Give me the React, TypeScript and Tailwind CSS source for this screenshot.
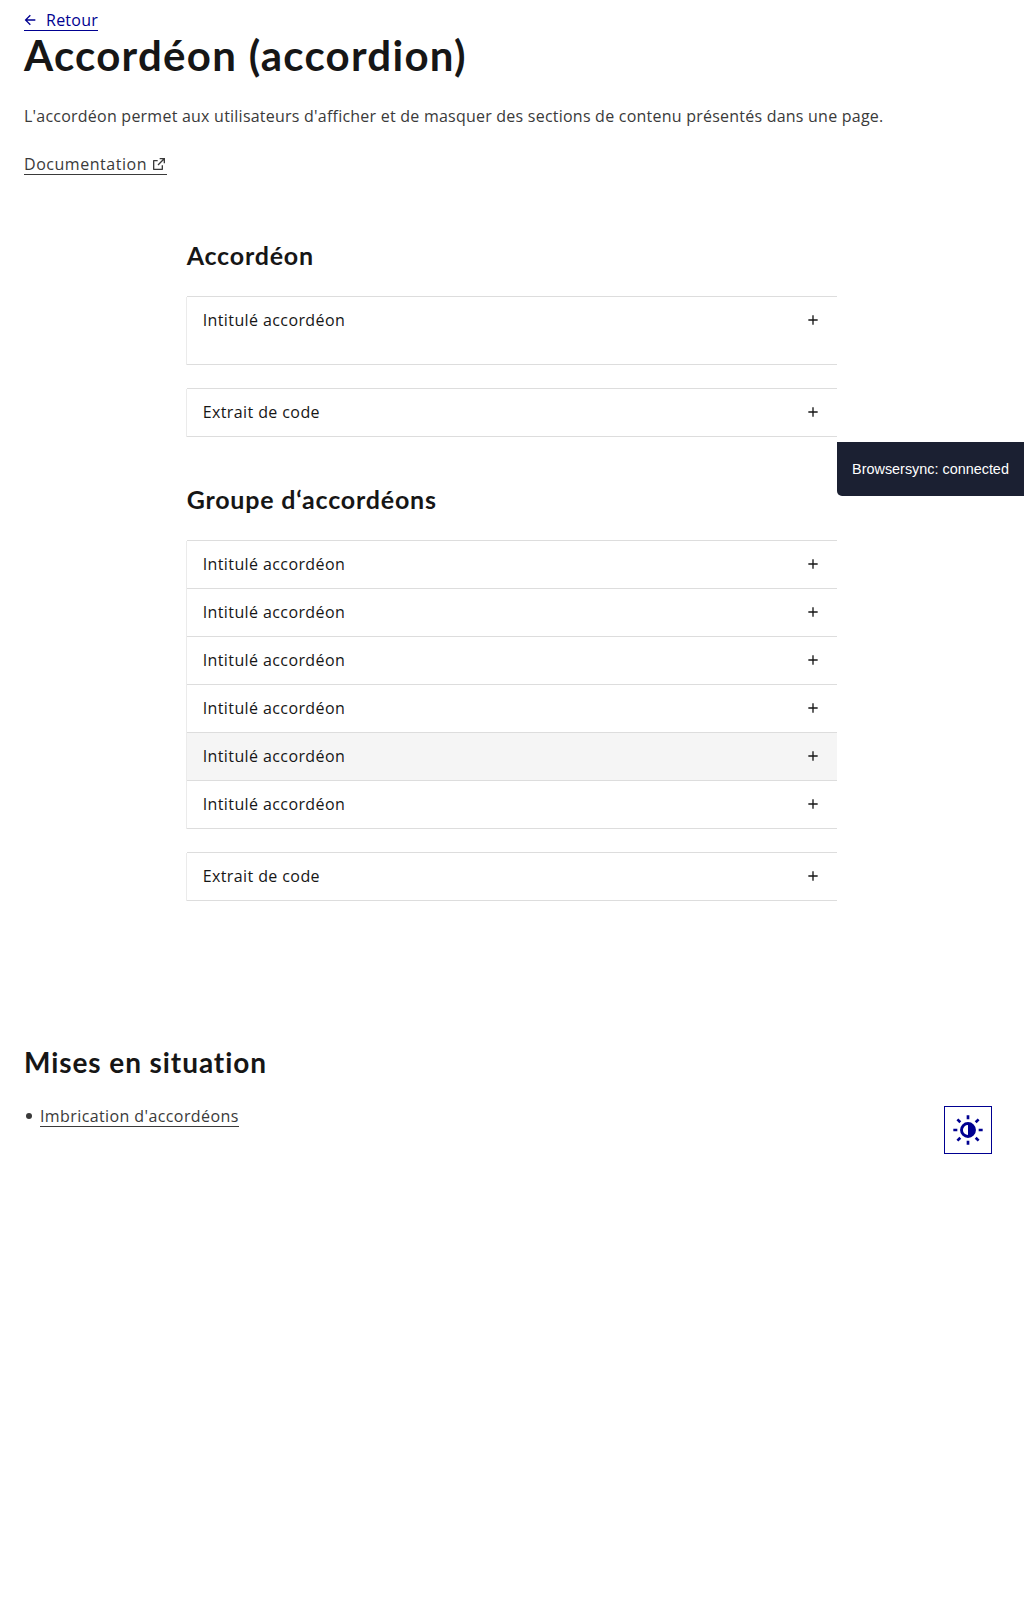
import type { ReactNode } from "react";

function PlusIcon() {
  return (
    <svg className="size-4 shrink-0" viewBox="0 0 24 24" fill="currentColor" aria-hidden="true">
      <path d="M11 11V5h2v6h6v2h-6v6h-2v-6H5v-2h6z" />
    </svg>
  );
}

function ArrowLeftIcon() {
  return (
    <svg className="mt-1 mr-2 -ml-0.5 size-4 shrink-0" viewBox="0 0 24 24" fill="currentColor" aria-hidden="true">
      <path d="M7.828 11H20v2H7.828l5.364 5.364-1.414 1.414L4 12l7.778-7.778 1.414 1.414z" />
    </svg>
  );
}

function ExternalIcon() {
  return (
    <svg className="mt-1 size-4 shrink-0" viewBox="0 0 24 24" fill="currentColor" aria-hidden="true">
      <path d="M10 6v2H5v11h11v-5h2v6a1 1 0 0 1-1 1H4a1 1 0 0 1-1-1V7a1 1 0 0 1 1-1h6zm11-3v8h-2V6.413l-7.793 7.794-1.414-1.414L17.585 5H13V3h8z" />
    </svg>
  );
}

function ThemeIcon() {
  return (
    <svg className="size-8" viewBox="-16 -16 32 32" aria-hidden="true">
      <circle r="6.5" fill="none" stroke="currentColor" strokeWidth="2.9" />
      <path d="M0-6.5a6.5 6.5 0 0 1 0 13z" fill="currentColor" />
      <g stroke="currentColor" strokeWidth="2.67">
        <path d="M0-14.67v4M0 10.67v4M-14.67 0h4M10.67 0h4" />
        <path d="M-10.6-10.6l2.9 2.9M10.6-10.6l-2.9 2.9M-10.6 10.6l2.9-2.9M10.6 10.6l-2.9-2.9" />
      </g>
    </svg>
  );
}

function AccordionItem({ label, highlighted = false, roomy = false }: { label: string; highlighted?: boolean; roomy?: boolean }) {
  return (
    <section className={roomy ? "border-b border-[#ddd] pb-5" : "border-b border-[#ddd]"}>
      <button
        type="button"
        className={
          highlighted
            ? "flex h-[47px] w-full items-center justify-between bg-[#f5f5f5] px-4 pb-px text-left"
            : "flex h-[47px] w-full items-center justify-between px-4 pb-px text-left"
        }
      >
        <span className="tracking-[0.4px]">{label}</span>
        <PlusIcon />
      </button>
    </section>
  );
}

function AccordionGroup({ children }: { children: ReactNode }) {
  return (
    <div>
      <div className="h-px bg-[#ddd]" />
      <div className="-ml-px border-l border-[#ebebeb]">{children}</div>
    </div>
  );
}

export default function App() {
  return (
    <div className="relative min-h-[1607px] bg-white px-6 pt-2 font-['Open_Sans',sans-serif] text-base leading-6 text-[#3a3a3a]">
      <header>
        <div className="flex h-6 items-start">
          <a href="#" className="flex h-[23px] items-start border-b border-[#000091] text-[#000091]">
            <ArrowLeftIcon />
            <span className="tracking-[0.25px]">Retour</span>
          </a>
        </div>
        <h1 className="-mt-px mb-[25px] font-['Lato',sans-serif] text-[42px] leading-[48px] font-bold tracking-[1.28px] text-[#161616]">
          Accordéon (accordion)
        </h1>
        <p className="tracking-[0.23px]">
          L'accordéon permet aux utilisateurs d'afficher et de masquer des sections de contenu présentés dans une page.
        </p>
        <div className="mt-6 flex h-6 items-start">
          <a href="#" className="flex h-[23px] items-start gap-1 border-b border-[#3a3a3a]">
            <span className="tracking-[0.54px]">Documentation</span>
            <ExternalIcon />
          </a>
        </div>
      </header>

      <main className="mx-auto mt-[63px] w-8/12 text-[#161616]">
        <h3 className="mb-[25px] font-['Lato',sans-serif] text-[25px] leading-8 font-bold tracking-[0.8px]">Accordéon</h3>
        <div className="flex flex-col gap-[23px]">
          <AccordionGroup>
            <AccordionItem label="Intitulé accordéon" roomy />
          </AccordionGroup>
          <AccordionGroup>
            <AccordionItem label="Extrait de code" />
          </AccordionGroup>
        </div>

        <h3 className="mt-[46px] mb-[25px] font-['Lato',sans-serif] text-[25px] leading-8 font-bold tracking-[0.8px]">
          Groupe d‘accordéons
        </h3>
        <div className="flex flex-col gap-[23px]">
          <AccordionGroup>
            <AccordionItem label="Intitulé accordéon" />
            <AccordionItem label="Intitulé accordéon" />
            <AccordionItem label="Intitulé accordéon" />
            <AccordionItem label="Intitulé accordéon" />
            <AccordionItem label="Intitulé accordéon" highlighted />
            <AccordionItem label="Intitulé accordéon" />
          </AccordionGroup>
          <AccordionGroup>
            <AccordionItem label="Extrait de code" />
          </AccordionGroup>
        </div>
      </main>

      <section className="mt-[143px]">
        <h2 className="mb-6 font-['Lato',sans-serif] text-[28px] leading-9 font-bold tracking-[0.92px] text-[#161616]">
          Mises en situation
        </h2>
        <ul>
          <li className="flex items-start">
            <span className="mt-[9px] mr-2 ml-0.5 size-1.5 shrink-0 rounded-full bg-current" />
            <a href="#" className="flex h-[23px] items-start border-b border-[#3a3a3a] tracking-[0.4px]">
              Imbrication d'accordéons
            </a>
          </li>
        </ul>
      </section>

      <button
        type="button"
        aria-label="Paramètres d’affichage"
        className="absolute top-[1106px] right-8 flex size-12 items-center justify-center border border-[#000091] bg-white text-[#000091]"
      >
        <ThemeIcon />
      </button>

      <div className="absolute top-[442px] right-0 flex h-[54px] w-[187px] items-center justify-center rounded-bl-[5px] bg-[#1b2032] font-['Liberation_Sans',sans-serif] text-[14.4px] text-white">
        Browsersync: connected
      </div>
    </div>
  );
}
